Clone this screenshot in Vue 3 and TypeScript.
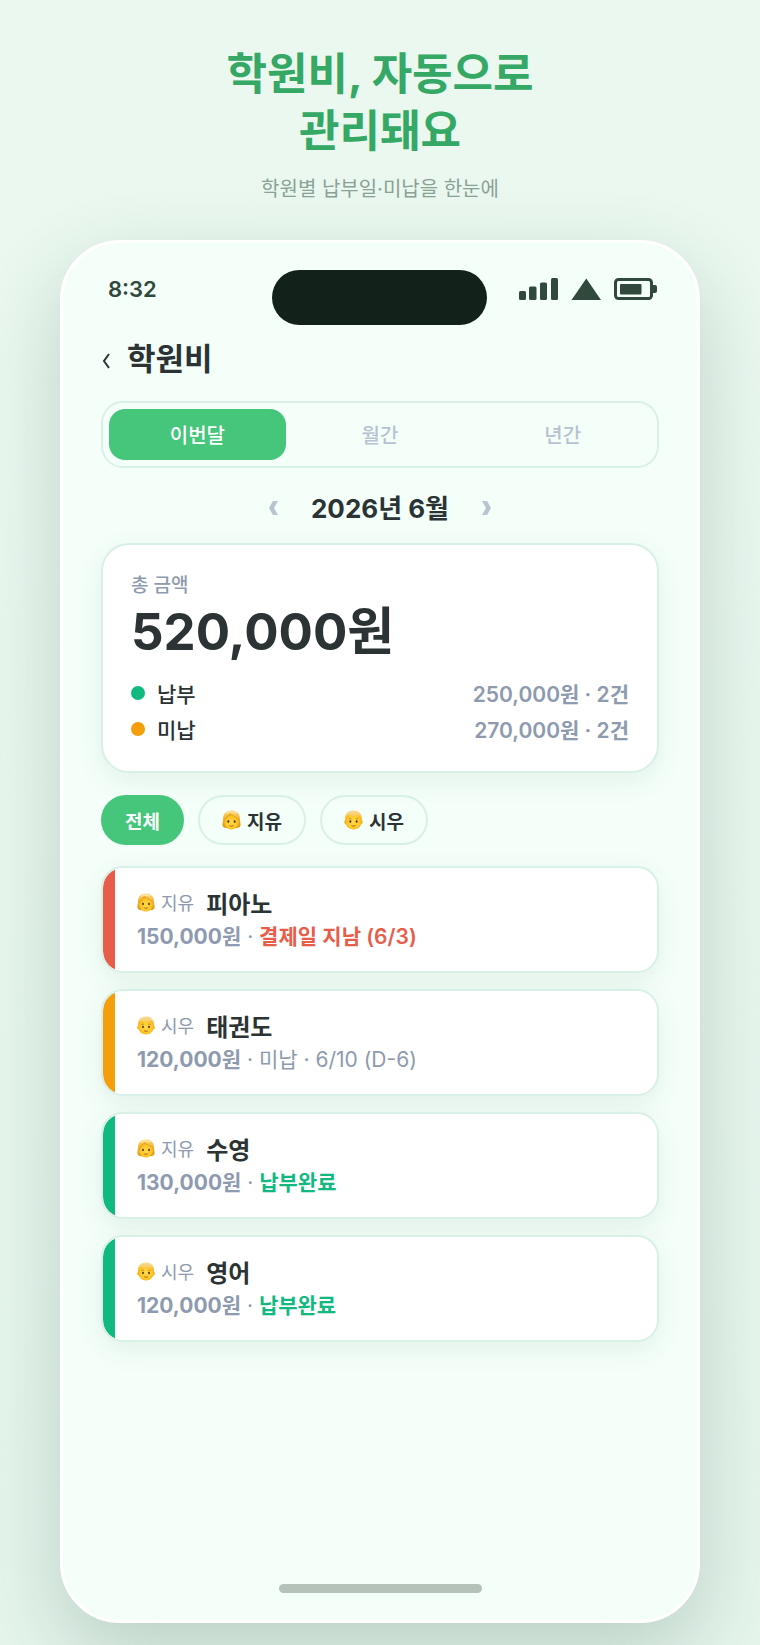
<script setup lang="ts">
import { ref } from 'vue'

type Kid = 'girl' | 'boy'
interface Lesson {
  kid: Kid
  name: string
  subject: string
  amount: string
  note: string
  state: 'late' | 'due' | 'paid'
}

const tabs = ['이번달', '월간', '년간']
const activeTab = ref('이번달')

const totals = [
  { label: '납부', value: '250,000원 · 2건', tone: 'paid' },
  { label: '미납', value: '270,000원 · 2건', tone: 'due' },
]

const filters: { label: string; kid?: Kid }[] = [
  { label: '전체' },
  { label: '지유', kid: 'girl' },
  { label: '시우', kid: 'boy' },
]
const activeFilter = ref('전체')

const lessons: Lesson[] = [
  { kid: 'girl', name: '지유', subject: '피아노', amount: '150,000원', note: '결제일 지남 (6/3)', state: 'late' },
  { kid: 'boy', name: '시우', subject: '태권도', amount: '120,000원', note: '미납 · 6/10 (D-6)', state: 'due' },
  { kid: 'girl', name: '지유', subject: '수영', amount: '130,000원', note: '납부완료', state: 'paid' },
  { kid: 'boy', name: '시우', subject: '영어', amount: '120,000원', note: '납부완료', state: 'paid' },
]
</script>

<template>
  <div class="page">
    <svg class="defs" aria-hidden="true">
      <defs>
        <radialGradient id="skin" cx="50%" cy="55%" r="55%">
          <stop offset="0" stop-color="#ffd94a" />
          <stop offset="0.7" stop-color="#fdc526" />
          <stop offset="1" stop-color="#eda514" />
        </radialGradient>
        <linearGradient id="hair" x1="0" y1="0" x2="0" y2="1">
          <stop offset="0" stop-color="#fbd77c" />
          <stop offset="0.4" stop-color="#f3b93a" />
          <stop offset="1" stop-color="#d8951a" />
        </linearGradient>
        <linearGradient id="crop" x1="0" y1="0" x2="0" y2="1">
          <stop offset="0" stop-color="#fadb90" />
          <stop offset="1" stop-color="#f5c04c" />
        </linearGradient>
      </defs>
      <symbol id="girl" viewBox="0 0 36 38">
        <path d="M18 1C8 1 2 8 2 16C2 22 0 26 1 30C2 33 6 35 10 34H26C30 35 34 33 35 30C36 26 34 22 34 16C34 8 28 1 18 1Z" fill="url(#hair)" />
        <path d="M4 20C5 14 10 10 15 8C20 11 29 13 32 20C33 31 26 37 18 37C10 37 3 31 4 20Z" fill="url(#skin)" />
        <path d="M15 7C12 12 8 14 4 20M15 7C19 12 28 12 32 19" fill="none" stroke="#dc9a22" stroke-width="1.2" />
        <path d="M9 6Q17 2 26 6" fill="none" stroke="#fde5a0" stroke-width="2.5" stroke-linecap="round" />
        <ellipse cx="12" cy="22" rx="1.8" ry="2.3" fill="#493018" />
        <ellipse cx="24" cy="22" rx="1.8" ry="2.3" fill="#493018" />
        <path d="M15 30Q18 32 21 30" fill="none" stroke="#96501a" stroke-width="1.6" stroke-linecap="round" />
      </symbol>
      <symbol id="boy" viewBox="0 0 36 38">
        <ellipse cx="2.500" cy="23" rx="2" ry="3.500" fill="#f2ae1c" />
        <ellipse cx="33.500" cy="23" rx="2" ry="3.500" fill="#f2ae1c" />
        <path d="M18 3C7 3 2 10 2 20C2 31 10 37 18 37C26 37 34 31 34 20C34 10 29 3 18 3Z" fill="url(#skin)" />
        <path d="M2 19C0 9 7 1 18 1C29 1 36 9 34 19C33 14 30 11 27 10Q18 12 9 10C6 11 3 14 2 19Z" fill="url(#crop)" />
        <ellipse cx="12" cy="22" rx="1.8" ry="2.3" fill="#493018" />
        <ellipse cx="24" cy="22" rx="1.8" ry="2.3" fill="#493018" />
        <path d="M9 17Q12 15 14 17M22 17Q24 15 27 17" fill="none" stroke="#b87a1c" stroke-width="1.4" />
        <path d="M15 30Q18 32 21 30" fill="none" stroke="#96501a" stroke-width="1.6" stroke-linecap="round" />
      </symbol>
    </svg>

    <header class="intro">
      <h1>학원비, 자동으로<br />관리돼요</h1>
      <p>학원별 납부일·미납을 한눈에</p>
    </header>

    <main class="phone">
      <div class="island"></div>
      <div class="status">
        <span class="time">8:32</span>
        <svg class="indicators" viewBox="0 0 138 22" aria-hidden="true">
          <g fill="#31483c">
            <rect x="0" y="13" width="7" height="9" rx="1.5" />
            <rect x="10" y="8.500" width="7.500" height="13.500" rx="1.500" />
            <rect x="21" y="4.500" width="7" height="17.500" rx="1.500" />
            <rect x="32" y="0" width="7" height="22" rx="1.500" />
            <path d="M67.300 0.500L82 22H52.500Z" />
            <rect x="101" y="6" width="21.500" height="10.500" rx="1" />
            <path d="M133 7H136Q138 7 138 9V13Q138 15 136 15H133Z" />
          </g>
          <rect x="96.500" y="1.500" width="36" height="19" rx="3" fill="none" stroke="#31483c" stroke-width="3" />
        </svg>
      </div>

      <div class="heading">
        <button class="back" type="button" aria-label="뒤로">
          <svg viewBox="0 0 8 16"><path d="M7 1L2 8L7 15" /></svg>
        </button>
        <h2>학원비</h2>
      </div>

      <nav class="tabs">
        <button
          v-for="tab in tabs"
          :key="tab"
          type="button"
          :class="{ active: tab === activeTab }"
          @click="activeTab = tab"
        >{{ tab }}</button>
      </nav>

      <div class="month">
        <button type="button" aria-label="이전 달">
          <svg viewBox="0 0 9 14"><path d="M4 0H9L5 7L9 14H4L0 7Z" /></svg>
        </button>
        <strong>2026년 6월</strong>
        <button type="button" aria-label="다음 달">
          <svg viewBox="0 0 9 14"><path d="M5 0H0L4 7L0 14H5L9 7Z" /></svg>
        </button>
      </div>

      <section class="summary">
        <span class="caption">총 금액</span>
        <strong class="total">520,000원</strong>
        <div v-for="row in totals" :key="row.label" class="row">
          <i class="dot" :class="row.tone"></i>
          <span class="kind">{{ row.label }}</span>
          <span class="value">{{ row.value }}</span>
        </div>
      </section>

      <div class="filters">
        <button
          v-for="f in filters"
          :key="f.label"
          type="button"
          :class="{ active: f.label === activeFilter }"
          @click="activeFilter = f.label"
        >
          <svg v-if="f.kid" class="face" aria-hidden="true"><use :href="'#' + f.kid" /></svg>
          <span>{{ f.label }}</span>
        </button>
      </div>

      <ul class="lessons">
        <li v-for="l in lessons" :key="l.subject" :class="l.state">
          <div class="who">
            <svg class="face" aria-hidden="true"><use :href="'#' + l.kid" /></svg>
            <span class="kid">{{ l.name }}</span>
            <strong>{{ l.subject }}</strong>
          </div>
          <div class="detail"><b>{{ l.amount }}</b> · <span class="note">{{ l.note }}</span></div>
        </li>
      </ul>

      <div class="home"></div>
    </main>
  </div>
</template>

<style>
body {
  margin: 0;
}
</style>

<style scoped>
.page {
  box-sizing: border-box;
  min-height: 100vh;
  display: flex;
  flex-direction: column;
  padding: 46px 60px 22px;
  overflow: hidden;
  color: #2b3335;
  background: linear-gradient(180deg, #ebf8f0, #e5f5ec);
  font-family: Inter, "Noto Sans CJK KR", sans-serif;
}
.defs {
  position: absolute;
  width: 0;
  height: 0;
}
h1, h2, p, ul {
  margin: 0;
  padding: 0;
}
button {
  border: 0;
  padding: 0;
  background: none;
  color: inherit;
  font: inherit;
  cursor: pointer;
}
.intro {
  text-align: center;
}
h1 {
  color: #35a866;
  font-size: 44px;
  line-height: 57px;
  font-weight: 700;
}
.intro p {
  margin-top: 14px;
  color: #8aa196;
  font-size: 20px;
  line-height: 30px;
}
.phone {
  position: relative;
  box-sizing: border-box;
  flex: 1;
  display: flex;
  flex-direction: column;
  margin-top: 36px;
  padding: 27px 38px;
  border: 3px solid #fff;
  border-radius: 60px;
  background: #f4fff9;
  box-shadow: 0 30px 80px rgba(25, 65, 45, 0.2);
}
.island {
  position: absolute;
  top: 27px;
  left: 50%;
  width: 215px;
  height: 55px;
  margin-left: -108px;
  border-radius: 28px;
  background: #12211a;
}
.status {
  display: flex;
  align-items: center;
  justify-content: space-between;
  height: 38px;
  padding: 0 2px 0 7px;
  color: #31483c;
}
.time {
  font-size: 22px;
  font-weight: 600;
}
.indicators {
  width: 138px;
  height: 22px;
}
.heading {
  display: flex;
  align-items: center;
  gap: 17px;
  height: 48px;
  margin-top: 27px;
  padding-left: 1px;
}
.back {
  display: flex;
  padding-top: 4px;
}
.back svg {
  width: 8px;
  height: 16px;
  fill: none;
  stroke: #2b3335;
  stroke-width: 2;
}
h2 {
  font-size: 31px;
  line-height: 48px;
  font-weight: 700;
}
.tabs {
  display: flex;
  gap: 6px;
  margin-top: 18px;
  padding: 6px;
  border: 2px solid #d8f0e5;
  border-radius: 22px;
}
.tabs button {
  flex: 1;
  height: 51px;
  border-radius: 16px;
  color: #b8c2d2;
  font-size: 20px;
  font-weight: 500;
}
.tabs .active {
  background: #45c67b;
  color: #fff;
}
.month {
  display: flex;
  align-items: center;
  justify-content: center;
  gap: 33px;
  height: 38px;
  margin: 19px 0 18px;
  font-size: 26px;
}
.month button {
  display: flex;
  padding-top: 3px;
}
.month svg {
  width: 9px;
  height: 14px;
  fill: #b8c2d2;
}
.month strong {
  font-weight: 700;
}
.summary {
  display: flex;
  flex-direction: column;
  padding: 28px 28px 24px;
  border: 2px solid #d8f0e5;
  border-radius: 28px;
  background: #fff;
  box-shadow: 0 8px 28px rgba(30, 80, 50, 0.08);
}
.caption {
  color: #8d9aaf;
  font-size: 19px;
  line-height: 26px;
  font-weight: 500;
}
.total {
  font-size: 51px;
  line-height: 66px;
  margin-bottom: 10px;
  font-weight: 700;
}
.row {
  display: flex;
  align-items: center;
  height: 36px;
  font-size: 21px;
  font-weight: 500;
}
.dot {
  width: 14px;
  height: 14px;
  margin-right: 12px;
  border-radius: 50%;
}
.dot.paid {
  background: #11b981;
}
.dot.due {
  background: #f59e0b;
}
.value {
  margin-left: auto;
  color: #8d9aaf;
  font-weight: 600;
}
.filters {
  display: flex;
  gap: 14px;
  margin: 22px 0 21px;
}
.filters button {
  display: flex;
  align-items: center;
  gap: 6px;
  height: 50px;
  padding: 0 22px;
  border: 2px solid #d8f0e5;
  border-radius: 25px;
  font-size: 19px;
  font-weight: 600;
}
.filters .active {
  border-color: #45c67b;
  background: #45c67b;
  color: #fff;
  font-weight: 700;
}
.face {
  flex: none;
  width: 19px;
  height: 20px;
}
.lessons {
  display: flex;
  flex-direction: column;
  gap: 16px;
  list-style: none;
}
.lessons li {
  padding: 16px 22px 17px 34px;
  border: 2px solid #d8f0e5;
  border-radius: 22px;
  background: linear-gradient(var(--tone), var(--tone)) 0 0 / 12px 100% no-repeat padding-box, #fff;
  box-shadow: 0 8px 28px rgba(30, 80, 50, 0.08);
}
.late {
  --tone: #e85d4a;
}
.due {
  --tone: #f59e0b;
}
.paid {
  --tone: #11b981;
}
.who {
  display: flex;
  align-items: center;
  height: 36px;
  color: #8d9aaf;
  font-size: 18px;
}
.who .face {
  width: 18px;
  height: 19px;
}
.kid {
  margin: 0 12px 0 6px;
}
.who strong {
  color: #2b3335;
  font-size: 24px;
  font-weight: 700;
}
.detail {
  color: #8d9aaf;
  font-size: 21px;
  line-height: 34px;
}
.detail b {
  font-weight: 700;
}
.late .note,
.paid .note {
  color: var(--tone);
  font-weight: 600;
}
.home {
  width: 203px;
  height: 9px;
  margin: auto auto 0;
  border-radius: 5px;
  background: #b4c2ba;
}
</style>
